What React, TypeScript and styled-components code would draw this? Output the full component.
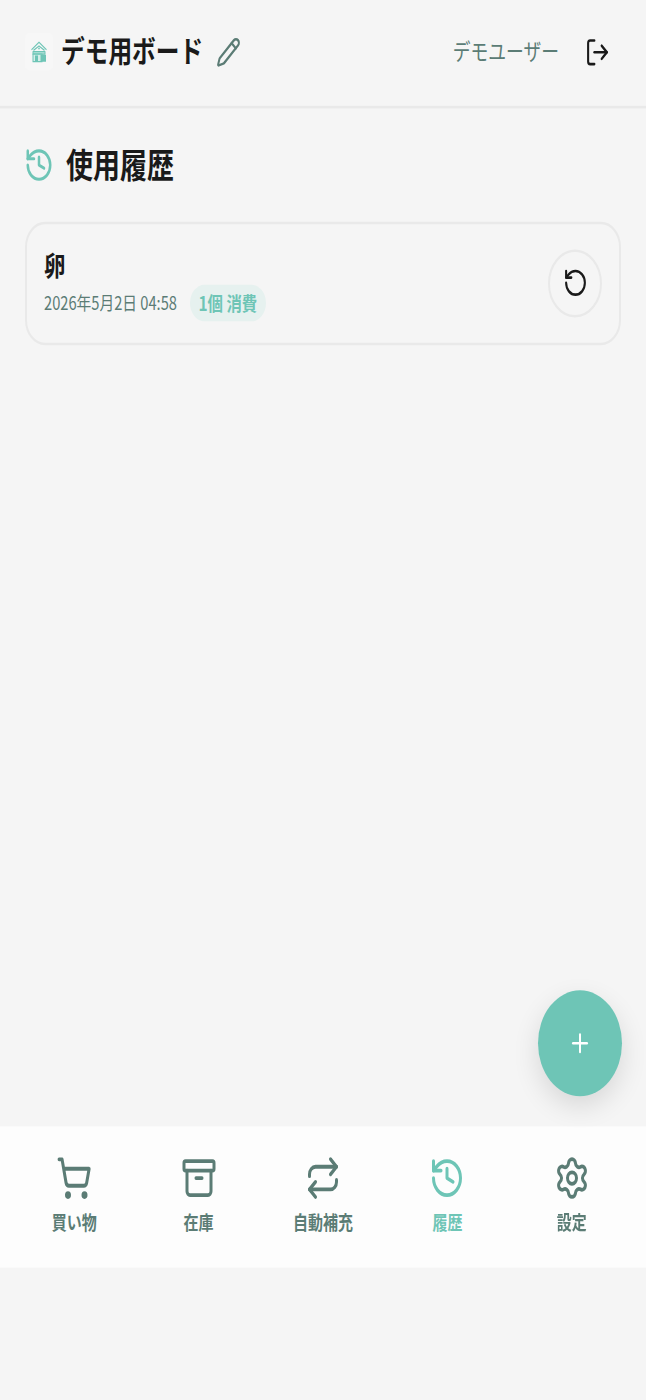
import React from 'react';
import styled, { createGlobalStyle } from 'styled-components';
import { Archive, History, LogOut, Pencil, Plus, Repeat, RotateCcw, Settings, ShoppingCart } from 'lucide-react';

const TEAL = '#6ec5b6';
const MUTED = '#5b7c75';
const INK = '#1a1a1a';
const LINE = '#e9e9e9';

const GlobalStyle = createGlobalStyle`
  html, body { margin: 0; padding: 0; background: #f5f5f5; }
  body { height: 1400px; font-family: "Noto Sans CJK JP", "Noto Sans", sans-serif; }
`;

// the capture is stretched vertically, so the whole page is laid out shorter and scaled
const Page = styled.div`
  position: relative;
  width: 646px;
  height: 1111px;
  display: flex;
  flex-direction: column;
  background: #f5f5f5;
  transform: scale(1, 1.26);
  transform-origin: top left;
`;

const Header = styled.header`
  height: 86px;
  box-sizing: border-box;
  flex-shrink: 0;
  display: flex;
  align-items: center;
  justify-content: space-between;
  padding: 0 36px 2px 25px;
  border-bottom: 2px solid ${LINE};
`;

const BoardGroup = styled.div`
  display: flex;
  align-items: center;
`;

const LogoBox = styled.div`
  width: 28px;
  height: 30px;
  display: flex;
  align-items: center;
  justify-content: center;
  background: #f7f7f7;
  border-radius: 4px;
  margin-right: 8px;
`;

const BoardName = styled.h1`
  margin: 0 13px 3px 0;
  font-size: 23.7px;
  font-weight: 700;
  line-height: 1.3;
  color: ${INK};
`;

const UserGroup = styled.div`
  display: flex;
  align-items: center;
  gap: 26px;
`;

const UserName = styled.span`
  margin-bottom: 3px;
  font-size: 17.8px;
  font-weight: 400;
  color: ${MUTED};
`;

const Main = styled.main`
  flex: 1;
  display: flex;
  flex-direction: column;
  padding: 31px 25px 0;
`;

const SectionTitle = styled.div`
  display: flex;
  align-items: center;
  gap: 12px;
  height: 28px;
  margin-bottom: 31px;
  color: ${TEAL};
`;

const SectionIcon = styled(History)`
  margin-left: -1px;
`;

const SectionText = styled.h2`
  margin: 0 0 4px;
  font-size: 27px;
  font-weight: 700;
  color: ${INK};
`;

const Card = styled.div`
  height: 97.5px;
  box-sizing: border-box;
  display: flex;
  align-items: center;
  justify-content: space-between;
  padding: 0 17px;
  border: 2px solid ${LINE};
  border-radius: 20px;
`;

const ItemInfo = styled.div`
  display: flex;
  flex-direction: column;
  gap: 1px;
`;

const ItemName = styled.div`
  font-size: 21.5px;
  font-weight: 700;
  line-height: 30px;
  color: ${INK};
`;

const MetaRow = styled.div`
  display: flex;
  align-items: center;
  gap: 13px;
`;

const DateText = styled.span`
  margin-bottom: 2px;
  font-size: 14.7px;
  color: ${MUTED};
`;

const Badge = styled.span`
  height: 29px;
  display: inline-flex;
  align-items: center;
  padding: 0 8.5px;
  border-radius: 15px;
  background: #e6f1ef;
  color: ${TEAL};
  font-size: 15.4px;
  font-weight: 700;
`;

const RestoreButton = styled.button`
  width: 54px;
  height: 54px;
  padding: 0;
  display: flex;
  align-items: center;
  justify-content: center;
  background: transparent;
  border: 2px solid ${LINE};
  border-radius: 50%;
  color: ${INK};
`;

const Fab = styled.button`
  position: absolute;
  right: 24.5px;
  top: 786px;
  z-index: 2;
  width: 84px;
  height: 84px;
  padding: 0;
  display: flex;
  align-items: center;
  justify-content: center;
  border: none;
  border-radius: 50%;
  background: ${TEAL};
  color: #fff;
  box-shadow: 0 8px 24px rgba(0, 0, 0, 0.12);
`;

const BottomNav = styled.nav`
  height: 112px;
  box-sizing: border-box;
  flex-shrink: 0;
  display: flex;
  padding: 23px 12px 0;
  margin-bottom: 105px;
  background: #fdfdfd;
`;

const NavItem = styled.div<{ $active?: boolean }>`
  flex: 1;
  display: flex;
  flex-direction: column;
  align-items: center;
  gap: 6px;
  color: ${p => (p.$active ? TEAL : MUTED)};
`;

const NavLabel = styled.span`
  font-size: 15px;
  font-weight: 700;
  line-height: 22px;
`;

const LogoMark = () => (
  <svg width="18" height="18" viewBox="0 0 18 18" fill="none" stroke={TEAL} strokeWidth="1" strokeLinejoin="round">
    <path d="M1.5 7.5 9 1.5l7.5 6" />
    <path d="M3.5 8 9 4.5 14.5 8" />
    <rect x="3" y="9" width="12" height="2" fill="#b9e3db" />
    <rect x="3" y="11" width="9" height="6" fill="#d5eee9" />
    <rect x="5" y="12" width="3" height="5" fill={TEAL} stroke="none" />
    <rect x="10.5" y="11.5" width="5.5" height="5.5" fill={TEAL} stroke="none" />
    <circle cx="9" cy="6.5" r="0.8" fill={TEAL} stroke="none" />
  </svg>
);

const navItems = [
  { label: '買い物', Icon: ShoppingCart },
  { label: '在庫', Icon: Archive },
  { label: '自動補充', Icon: Repeat },
  { label: '履歴', Icon: History, active: true },
  { label: '設定', Icon: Settings },
];

export default function App() {
  return (
    <>
      <GlobalStyle />
      <Page>
        <Header>
          <BoardGroup>
            <LogoBox><LogoMark /></LogoBox>
            <BoardName>デモ用ボード</BoardName>
            <Pencil size={25} color={MUTED} strokeWidth={1.9} />
          </BoardGroup>
          <UserGroup>
            <UserName>デモユーザー</UserName>
            <LogOut size={25} color={INK} />
          </UserGroup>
        </Header>

        <Main>
          <SectionTitle>
            <SectionIcon size={30} />
            <SectionText>使用履歴</SectionText>
          </SectionTitle>
          <Card>
            <ItemInfo>
              <ItemName>卵</ItemName>
              <MetaRow>
                <DateText>2026年5月2日 04:58</DateText>
                <Badge>1個 消費</Badge>
              </MetaRow>
            </ItemInfo>
            <RestoreButton>
              <RotateCcw size={25} />
            </RestoreButton>
          </Card>
        </Main>

        <Fab>
          <Plus size={24} />
        </Fab>

        <BottomNav>
          {navItems.map(({ label, Icon, active }) => (
            <NavItem key={label} $active={active}>
              <Icon size={36} />
              <NavLabel>{label}</NavLabel>
            </NavItem>
          ))}
        </BottomNav>
      </Page>
    </>
  );
}
